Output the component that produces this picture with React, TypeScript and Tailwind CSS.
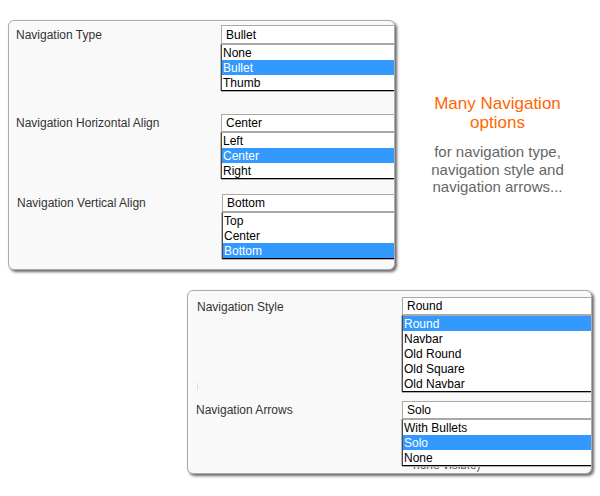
import React from "react";

const FONT = { fontFamily: '"Liberation Sans", Arial, sans-serif' };

type SelProps = {
  value: string;
  options: string[];
  selected: number;
  tall?: boolean;
  children?: React.ReactNode;
};

function SelectBox({ value, options, selected, tall, children }: SelProps) {
  return (
    <div className="relative w-[230px] shrink-0">
      <div
        className={
          tall
            ? "h-[19px] border border-[#a9a9a9] bg-white pl-[4px] text-[12px] leading-[18px] text-black"
            : "h-[18px] border border-[#a9a9a9] bg-white pl-[4px] text-[12px] leading-[17px] text-black"
        }
      >
        {value}
      </div>
      {children}
      <div className="relative z-10 border border-t-[#a8a8a8] border-l-[#4a4a4a] border-r-[#4a4a4a] border-b-black bg-white shadow-[0_1px_0_#b0b0b0,-1px_0_0_#b8b8b8]">
        {options.map((o, i) => (
          <div
            key={o}
            className={
              i === selected
                ? "h-[15px] bg-[#3399ff] pl-px text-[12px] leading-[16px] text-white"
                : "h-[15px] pl-px text-[12px] leading-[16px] text-black"
            }
          >
            {o}
          </div>
        ))}
      </div>
    </div>
  );
}

export default function App() {
  return (
    <div className="min-h-[496px] w-[600px] bg-white pt-[20px] pl-[8px]" style={FONT}>
      <div className="flex">
        <div className="h-[250px] w-[387px] shrink-0 overflow-hidden rounded-[6px] border border-[#ababab] bg-[#f9f9f9] shadow-[2px_2px_3px_rgba(0,0,0,0.6)]">
          <div className="flex pt-[4px] pl-[7px]">
            <div className="w-[205px] shrink-0 text-[12px] leading-[21px] text-[#333]">Navigation Type</div>
            <SelectBox value="Bullet" options={["None", "Bullet", "Thumb"]} selected={1} tall />
          </div>
          <div className="mt-[23px] flex pl-[7px]">
            <div className="w-[205px] shrink-0 text-[12px] leading-[18px] text-[#333]">Navigation Horizontal Align</div>
            <SelectBox value="Center" options={["Left", "Center", "Right"]} selected={1} />
          </div>
          <div className="mt-[15px] flex pl-[8px]">
            <div className="w-[205px] shrink-0 text-[12px] leading-[19px] text-[#333]">Navigation Vertical Align</div>
            <SelectBox value="Bottom" options={["Top", "Center", "Bottom"]} selected={2} />
          </div>
        </div>
        <div className="flex-1 pt-[74px] text-center">
          <div className="text-[17px] leading-[19px] text-[#ff6600]">
            Many Navigation
            <br />
            options
          </div>
          <div className="mt-[11px] text-[15px] leading-[17.5px] text-[#666]">
            for navigation type,
            <br />
            navigation style and
            <br />
            navigation arrows...
          </div>
        </div>
      </div>

      <div className="mt-[20px] ml-[179px] h-[184px] w-[405px] overflow-hidden rounded-[6px] border border-[#ababab] bg-[#f9f9f9] shadow-[2px_2px_3px_rgba(0,0,0,0.6)]">
        <div className="flex pt-[6px] pl-[9px]">
          <div className="flex w-[205px] shrink-0 flex-col">
            <div className="text-[12px] leading-[20px] text-[#333]">Navigation Style</div>
            <div className="mt-[66px] h-[7px] w-px bg-[#ecd9b0]" />
          </div>
          <SelectBox
            value="Round"
            options={["Round", "Navbar", "Old Round", "Old Square", "Old Navbar"]}
            selected={0}
          />
        </div>
        <div className="mt-[9px] flex pl-[8px]">
          <div className="w-[206px] shrink-0 text-[12px] leading-[19px] text-[#333]">Navigation Arrows</div>
          <SelectBox value="Solo" options={["With Bullets", "Solo", "None"]} selected={1}>
            <div className="absolute top-[57px] left-[11px] text-[12px] leading-[15px] text-[#555]">none visible)</div>
          </SelectBox>
        </div>
      </div>
    </div>
  );
}
